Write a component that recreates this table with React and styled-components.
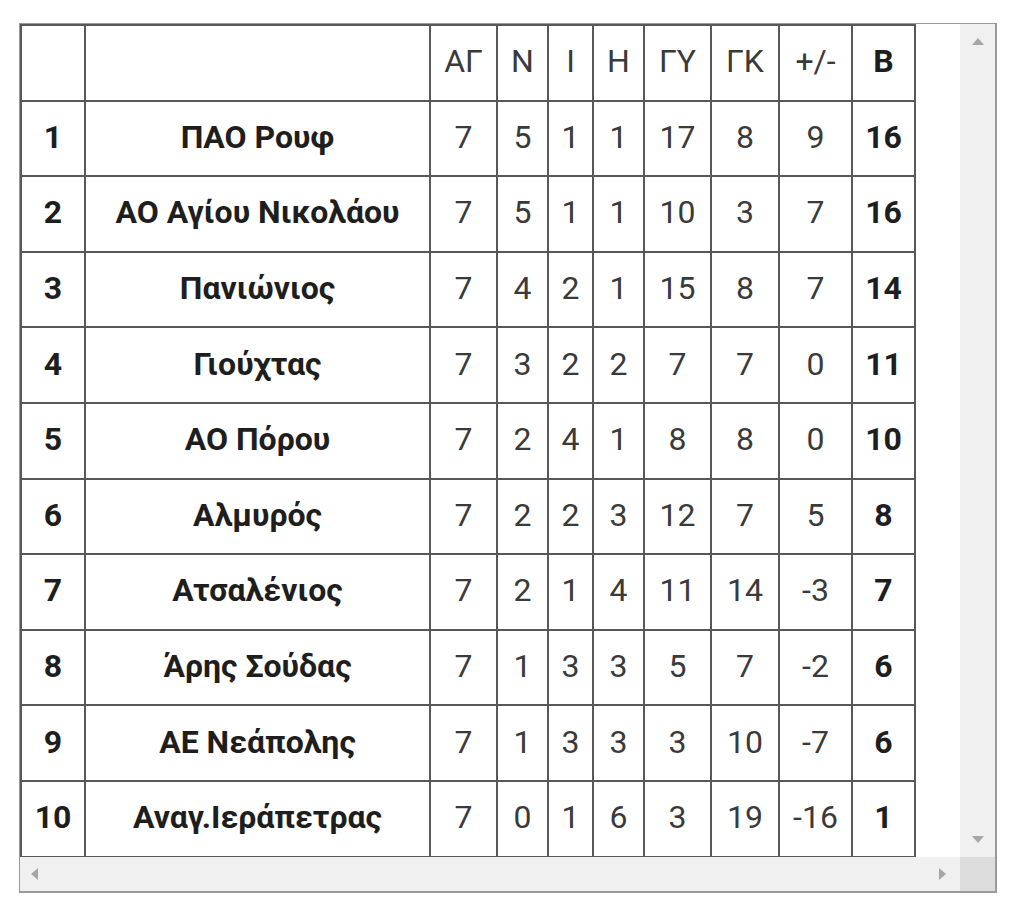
import React from "react";
import styled, { createGlobalStyle } from "styled-components";

const GlobalStyle = createGlobalStyle`
    html, body {
        margin: 0;
        padding: 0;
        background: #fff;
        font-family: Roboto, "Noto Sans", Arial, sans-serif;
    }
`;

const Page = styled.div`
    padding: 23px 0 0 19px;
    width: 1024px;
    height: 912px;
    box-sizing: border-box;
`;

const Frame = styled.div`
    display: grid;
    grid-template-columns: 940px 35px;
    grid-template-rows: 833px 34px;
    width: 978px;
    border: 1px solid #9a9a9a;
    border-right-width: 2px;
    border-bottom-width: 2px;
    box-sizing: border-box;
    background: #fff;
`;

const Viewport = styled.div`
    overflow: hidden;
    background: #fff;
`;

const Table = styled.table`
    border-collapse: collapse;
    table-layout: fixed;
    width: 895px;
    color: #333;
`;

const Row = styled.tr`
    height: 75.6px;
`;

const Cell = styled.td`
    border: 2px solid #585858;
    padding: 0 0 3px;
    text-align: center;
    vertical-align: middle;
    font-size: 32px;
    font-weight: ${(p) => (p.$bold ? 700 : 400)};
    color: ${(p) => (p.$bold ? "#1e1e1e" : "#3a3a3a")};
    white-space: nowrap;
`;

const Track = styled.div`
    background: #f0f0f0;
    display: flex;
    flex-direction: ${(p) => (p.$vertical ? "column" : "row")};
    justify-content: space-between;
    align-items: center;
    padding: ${(p) => (p.$vertical ? "14px 0 14px" : "0 14px 0 11px")};
`;

const Corner = styled.div`
    background: #dcdcdc;
`;

const Arrow = styled.span`
    width: 0;
    height: 0;
    border: 6px solid transparent;
    ${(p) =>
        p.$dir === "up" &&
        `border-bottom: 7px solid #a6a6a6; border-top-width: 0;`}
    ${(p) =>
        p.$dir === "down" &&
        `border-top: 7px solid #a6a6a6; border-bottom-width: 0;`}
    ${(p) =>
        p.$dir === "left" &&
        `border-right: 7px solid #a6a6a6; border-left-width: 0;`}
    ${(p) =>
        p.$dir === "right" &&
        `border-left: 7px solid #a6a6a6; border-right-width: 0;`}
`;

const widths = [64, 345, 67, 51, 45, 51, 67, 68, 73, 63];
const headers = ["", "", "ΑΓ", "Ν", "Ι", "Η", "ΓΥ", "ΓΚ", "+/-", "Β"];

const rows = [
    [1, "ΠΑΟ Ρουφ", 7, 5, 1, 1, 17, 8, 9, 16],
    [2, "ΑΟ Αγίου Νικολάου", 7, 5, 1, 1, 10, 3, 7, 16],
    [3, "Πανιώνιος", 7, 4, 2, 1, 15, 8, 7, 14],
    [4, "Γιούχτας", 7, 3, 2, 2, 7, 7, 0, 11],
    [5, "ΑΟ Πόρου", 7, 2, 4, 1, 8, 8, 0, 10],
    [6, "Αλμυρός", 7, 2, 2, 3, 12, 7, 5, 8],
    [7, "Ατσαλένιος", 7, 2, 1, 4, 11, 14, -3, 7],
    [8, "Άρης Σούδας", 7, 1, 3, 3, 5, 7, -2, 6],
    [9, "ΑΕ Νεάπολης", 7, 1, 3, 3, 3, 10, -7, 6],
    [10, "Αναγ.Ιεράπετρας", 7, 0, 1, 6, 3, 19, -16, 1],
];

const boldCol = (i) => i === 0 || i === 1 || i === 9;

export default function App() {
    return (
        <Page>
            <GlobalStyle />
            <Frame>
                <Viewport>
                    <Table>
                        <colgroup>
                            {widths.map((w, i) => (
                                <col key={i} style={{ width: w }} />
                            ))}
                        </colgroup>
                        <tbody>
                            <Row>
                                {headers.map((h, i) => (
                                    <Cell key={i} $bold={i === 9}>
                                        {h}
                                    </Cell>
                                ))}
                            </Row>
                            {rows.map((r) => (
                                <Row key={r[0]}>
                                    {r.map((v, i) => (
                                        <Cell key={i} $bold={boldCol(i)}>
                                            {v}
                                        </Cell>
                                    ))}
                                </Row>
                            ))}
                        </tbody>
                    </Table>
                </Viewport>
                <Track $vertical>
                    <Arrow $dir="up" />
                    <Arrow $dir="down" />
                </Track>
                <Track>
                    <Arrow $dir="left" />
                    <Arrow $dir="right" />
                </Track>
                <Corner />
            </Frame>
        </Page>
    );
}
